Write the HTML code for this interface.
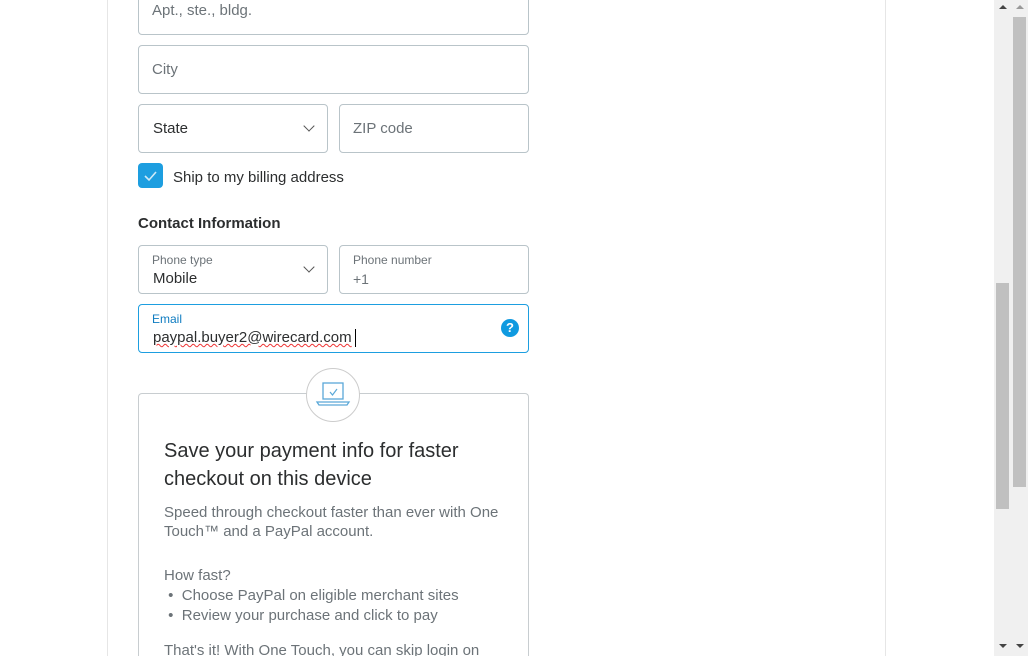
<!DOCTYPE html>
<html style="overflow:hidden;height:656px"><head><style>
body{margin:0;width:1028px;height:656px;overflow:hidden;background:#fff;font-family:"Liberation Sans",sans-serif;position:relative}
.a{position:absolute}
.f{position:absolute;border:1px solid #b9c4c9;border-radius:4px;box-sizing:border-box;background:#fff}
.ph{position:absolute;font-size:15px;color:#6c7378}
.lab{position:absolute;font-size:12px;color:#6c7378}
.val{position:absolute;font-size:15px;color:#2c2e2f}
.chev{position:absolute;width:7px;height:7px;border-right:1.5px solid #555;border-bottom:1.5px solid #555;transform:rotate(45deg)}
.g{color:#6c7378;font-size:15px}
</style></head><body>
<div class="a" style="left:107px;top:0;width:1px;height:656px;background:#e6e6e6"></div>
<div class="a" style="left:885px;top:0;width:1px;height:656px;background:#e6e6e6"></div>

<div class="f" style="left:138px;top:-14px;width:391px;height:49px"><div class="ph" style="left:13px;top:15px">Apt., ste., bldg.</div></div>
<div class="f" style="left:138px;top:45px;width:391px;height:49px"><div class="ph" style="left:13px;top:15px">City</div></div>
<div class="f" style="left:138px;top:104px;width:190px;height:49px"><div class="val" style="left:14px;top:15px">State</div><div class="chev" style="left:166px;top:17px"></div></div>
<div class="f" style="left:339px;top:104px;width:190px;height:49px"><div class="ph" style="left:13px;top:15px">ZIP code</div></div>

<div class="a" style="left:138px;top:163px;width:25px;height:25px;background:#1d9ee0;border-radius:4px"></div>
<svg class="a" style="left:138px;top:163px" width="25" height="25"><path d="M7 13 L11 17 L18 9" stroke="#cfeaf8" stroke-width="1.6" fill="none"/></svg>
<div class="a" style="left:173px;top:169px;font-size:15px;color:#2c2e2f">Ship to my billing address</div>

<div class="a" style="left:138px;top:215px;font-size:15px;font-weight:bold;color:#2c2e2f">Contact Information</div>

<div class="f" style="left:138px;top:245px;width:190px;height:49px"><div class="lab" style="left:13px;top:7px">Phone type</div><div class="val" style="left:14px;top:24px">Mobile</div><div class="chev" style="left:166px;top:17px"></div></div>
<div class="f" style="left:339px;top:245px;width:190px;height:49px"><div class="lab" style="left:13px;top:7px">Phone number</div><div class="ph" style="left:13px;top:25px;font-size:14px">+1</div></div>
<div class="f" style="left:138px;top:304px;width:391px;height:49px;border-color:#1d9ee0"><div class="lab" style="left:13px;top:7px;color:#0f7cc1">Email</div><div class="val" style="left:14px;top:24px;text-decoration:underline wavy #e33;text-decoration-thickness:1px">paypal.buyer2@wirecard.com</div><div class="a" style="left:216px;top:24px;width:1px;height:18px;background:#000"></div>
<div class="a" style="left:362px;top:14px;width:18px;height:18px;border-radius:50%;background:#0f9ae0;color:#fff;font-size:13px;font-weight:bold;text-align:center;line-height:18px">?</div></div>

<div class="f" style="left:138px;top:393px;width:391px;height:263px;border-color:#c8cdd0;border-bottom:none;border-radius:4px 4px 0 0"></div>
<div class="a" style="left:306px;top:368px;width:54px;height:54px;border-radius:50%;border:1px solid #ccc;background:#fff;box-sizing:border-box"></div>
<svg class="a" style="left:306px;top:368px" width="54" height="54"><rect x="17" y="15" width="20" height="16" fill="none" stroke="#5aa8d8" stroke-width="1.3"/><path d="M11 34 H43 L41 37 H13 Z" fill="none" stroke="#5aa8d8" stroke-width="1.3"/><path d="M24 24 L26.5 27 L31 21" fill="none" stroke="#5aa8d8" stroke-width="1.2"/></svg>

<div class="a" style="left:164px;top:437px;font-size:20px;line-height:28px;color:#2c2e2f">Save your payment info for faster<br>checkout on this device</div>
<div class="a g" style="left:164px;top:503px;line-height:19px">Speed through checkout faster than ever with One<br>Touch™ and a PayPal account.</div>
<div class="a g" style="left:164px;top:566px;line-height:20px">How fast?<br>&nbsp;•&nbsp; Choose PayPal on eligible merchant sites<br>&nbsp;•&nbsp; Review your purchase and click to pay</div>
<div class="a g" style="left:164px;top:642px">That's it! With One Touch, you can skip login on</div>

<div class="a" style="left:994px;top:0;width:34px;height:656px;background:#f0f0f0"></div>
<div class="a" style="left:996px;top:283px;width:13px;height:226px;background:#c0c0c0"></div>
<div class="a" style="left:1013px;top:17px;width:13px;height:470px;background:#c0c0c0"></div>
<div class="a" style="left:999px;top:5px;border:4px solid transparent;border-bottom:4px solid #444;border-top:0"></div>
<div class="a" style="left:1016px;top:5px;border:4px solid transparent;border-bottom:4px solid #999;border-top:0"></div>
<div class="a" style="left:999px;top:644px;border:4px solid transparent;border-top:4px solid #444;border-bottom:0"></div>
<div class="a" style="left:1016px;top:644px;border:4px solid transparent;border-top:4px solid #444;border-bottom:0"></div>
</body></html>
